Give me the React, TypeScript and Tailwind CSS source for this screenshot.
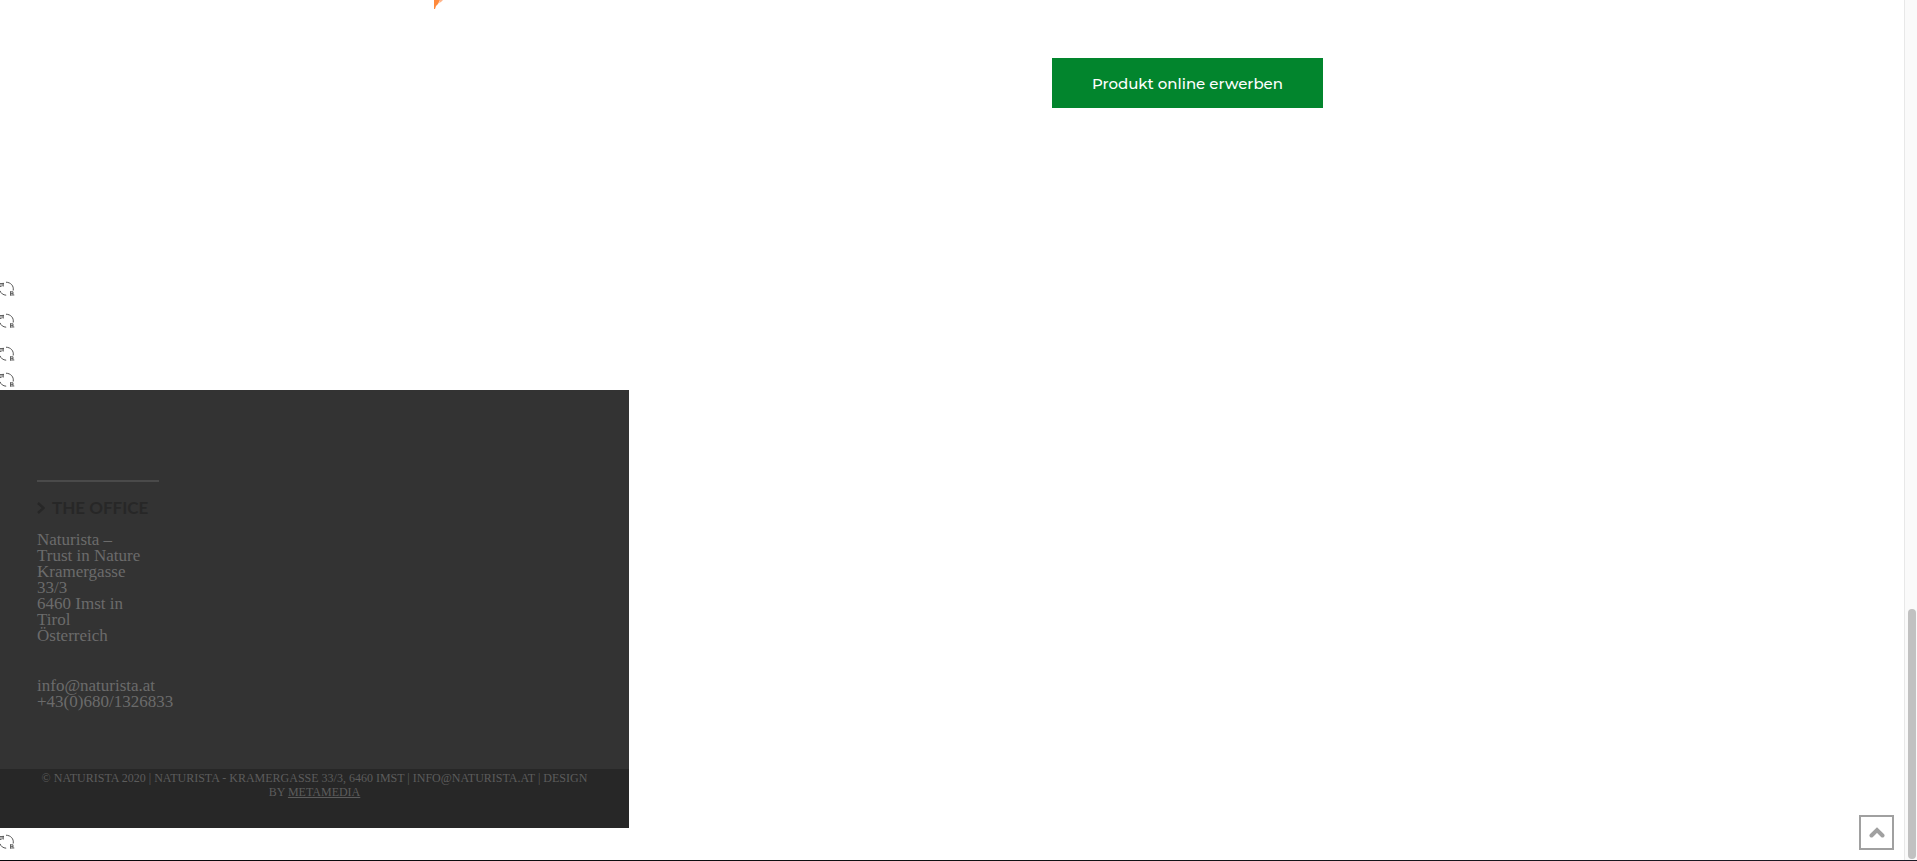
const RefreshIcon = () => (
  <svg
    viewBox="0 0 15 15"
    className="block h-[15px] w-[15px] text-[#555555]"
    fill="none"
    stroke="currentColor"
    aria-hidden="true"
  >
    <path d="M6 1.200c4.800.2 8 3.600 7.200 8.300M6.200 14.200C3 14 1 12.400 0 9.800" />
    <path
      d="M0 2.500h4M0 4h3.500M0 5.500h1.500M3.200 1.800v3.800M10 10.800h3M10.500 10.500v4M10 14h4.300M10.500 12.400h2.500M13 10.800v3"
      strokeWidth=".9"
    />
  </svg>
);

const Loader = ({ className }: { className: string }) => (
  <div className={className}>
    <RefreshIcon />
  </div>
);

const ProductSection = () => (
  <section className="flex h-[279px] items-start">
    <div className="flex w-[55.250%]">
      <svg
        viewBox="0 0 11 10"
        className="ml-[433px] h-[10px] w-[11px]"
        aria-hidden="true"
      >
        <path d="M1 0h6L5 4 3 6 2 9H1z" fill="#ff8a3c" />
        <path d="M7 0h3L8 2 6 3z" fill="#ffb48a" />
      </svg>
    </div>
    <button
      type="button"
      className="h-[50px] mt-[58px] w-[271px] bg-[#02852d] pt-[2px] font-['Montserrat','Inter',sans-serif] text-[15px] font-medium text-white"
    >
      Produkt online erwerben
    </button>
  </section>
);

const Footer = () => (
  <footer className="w-[629px] max-w-full bg-[#333333] font-['Liberation_Serif',serif] text-[#6b6b6b]">
    <div className="px-[37px] pt-[90px] pb-[59px]">
      <hr className="w-[122px] border-t-2 border-[#4a4a4a]" />
      <h3 className="mt-4 flex items-center gap-[7px] font-['Lato',sans-serif] text-[17px] leading-5 font-bold text-[#272727]">
        <svg
          viewBox="0 0 8 12"
          className="h-3 w-2"
          fill="none"
          stroke="currentColor"
          strokeWidth="2.500"
          aria-hidden="true"
        >
          <path d="M1 1l5.500 5L1 11" />
        </svg>
        THE OFFICE
      </h3>
      <address className="mt-[14px] text-[17px] leading-4 not-italic">
        <p>
          Naturista –<br />
          Trust in Nature
          <br />
          Kramergasse
          <br />
          33/3
          <br />
          6460 Imst in
          <br />
          Tirol
          <br />
          Österreich
        </p>
        <p className="mt-[34px]">
          info@naturista.at
          <br />
          +43(0)680/1326833
        </p>
      </address>
    </div>
    <div className="h-[59px] bg-[#272727] px-10 pt-[2px] text-center text-xs leading-[14px] text-[#5c5c5c]">
      © NATURISTA 2020 | NATURISTA - KRAMERGASSE 33/3, 6460 IMST |
      INFO@NATURISTA.AT | DESIGN
      <br />
      BY{" "}
      <a href="#metamedia" className="underline">
        METAMEDIA
      </a>
    </div>
  </footer>
);

const ScrollTrack = () => (
  <div className="flex w-[13px] shrink-0 flex-col items-end justify-end border-l border-[#e8e8e8] bg-[#fafafa] pr-px pb-px">
    <div className="h-[250px] w-2 rounded-full bg-[#c1c1c1]" />
  </div>
);

const App = () => {
  return (
    <div className="flex min-h-screen flex-col bg-white">
      <div className="flex flex-1">
        <main className="min-w-0 flex-1">
          <ProductSection />
          <Loader className="pt-[2px] pb-[15px]" />
          <Loader className="pt-[2px] pb-4" />
          <Loader className="pt-[2px] pb-[9px]" />
          <Loader className="pt-[2px] pb-[3px]" />
          <Footer />
          <Loader className="pt-[6px]" />
        </main>
        <ScrollTrack />
      </div>
      <div className="h-px bg-linear-to-r from-[#08080c] via-[#0d1112] to-[#1c1a26]" />
      <button
        type="button"
        aria-label="Nach oben"
        className="fixed right-[23px] bottom-[11px] flex h-[35px] w-[35px] items-center justify-center border-2 border-[#a0a0a0] bg-white text-[#a0a0a0]"
      >
        <svg
          viewBox="0 0 16 12"
          className="h-3 w-4"
          fill="none"
          stroke="currentColor"
          strokeWidth="4"
          strokeLinecap="round"
          aria-hidden="true"
        >
          <path d="M2.500 8.500L8 3l5.500 5.500" />
        </svg>
      </button>
    </div>
  );
};

export default App;
